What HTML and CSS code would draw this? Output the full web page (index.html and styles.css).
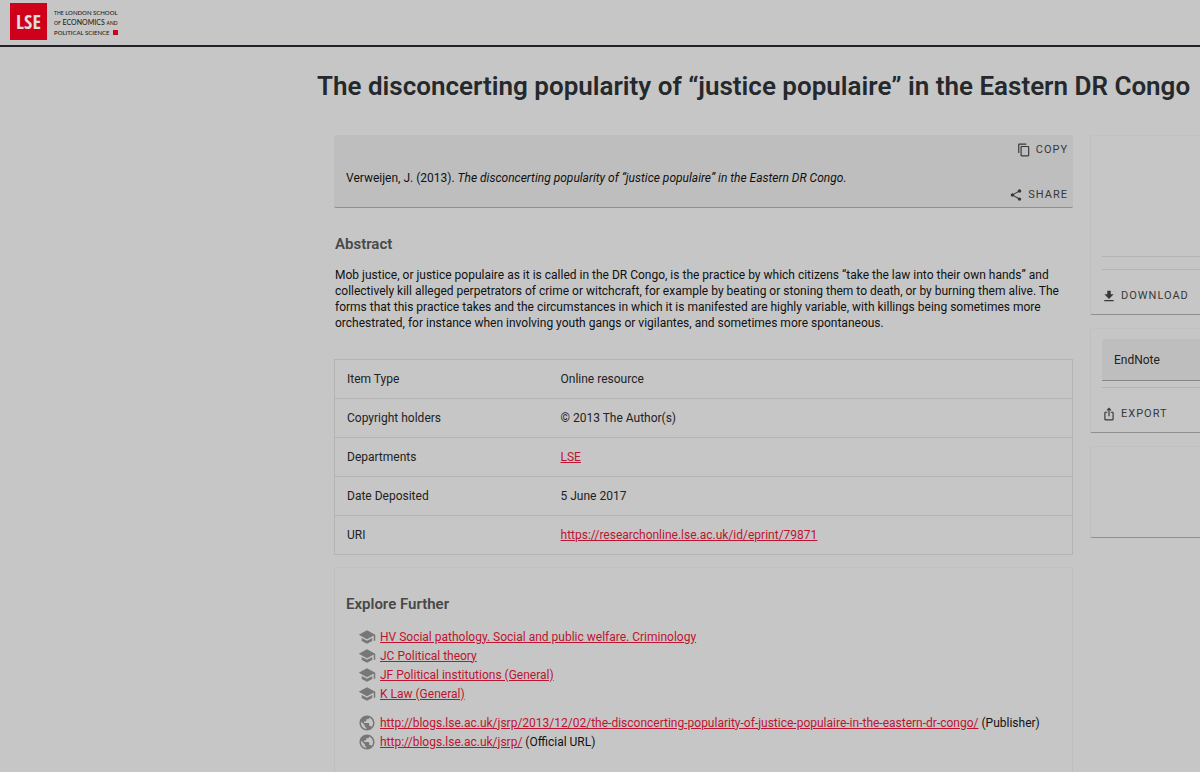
FILE: index.html
```html
<!DOCTYPE html>
<html lang="en">
<head>
    <meta charset="UTF-8">
    <meta name="viewport" content="width=device-width, initial-scale=1.0">
    <title>The disconcerting popularity of “justice populaire” in the Eastern DR Congo</title>
    <link rel="stylesheet" href="styles.css">
</head>
<body>
    <!-- icons used more than once -->
    <svg class="sprite" width="0" height="0" aria-hidden="true">
        <symbol id="school" viewBox="0 0 24 24">
            <path d="M5 13.18v4L12 21l7-3.82v-4L12 17l-7-3.82zM12 3L1 9l11 6 9-4.91V17h2V9L12 3z"/>
        </symbol>
        <symbol id="globe" viewBox="0 0 24 24">
            <path d="M12 2C6.48 2 2 6.48 2 12s4.48 10 10 10 10-4.48 10-10S17.52 2 12 2zm-1 17.93c-3.95-.49-7-3.85-7-7.93 0-.62.08-1.21.21-1.79L9 15v1c0 1.1.9 2 2 2v1.93zm6.9-2.54c-.26-.81-1-1.39-1.9-1.39h-1v-3c0-.55-.45-1-1-1H8v-2h2c.55 0 1-.45 1-1V7h2c1.1 0 2-.9 2-2v-.41c2.93 1.19 5 4.06 5 7.41 0 2.08-.8 3.97-2.1 5.39z"/>
        </symbol>
    </svg>

    <header class="site-header">
        <a class="logo" href="#">
            <span class="logo-box">LSE</span>
            <span class="logo-name">
                <span><small>THE</small> LONDON SCHOOL</span>
                <span class="wide"><small>OF</small> ECONOMICS <small>AND</small></span>
                <span>POLITICAL SCIENCE <i class="logo-mark"></i></span>
            </span>
        </a>
    </header>

    <div class="page">
        <h1>The disconcerting popularity of “justice populaire” in the Eastern DR Congo</h1>

        <div class="layout">
            <main>
                <section class="citation">
                    <p>Verweijen, J. (2013). <em>The disconcerting popularity of “justice populaire” in the Eastern DR Congo.</em></p>
                    <div class="actions">
                        <button type="button">
                            <svg width="14" height="14" viewBox="0 0 24 24"><path d="M16 1H4C2.900 1 2 1.900 2 3v14h2V3h12V1zm3 4H8c-1.100 0-2 .9-2 2v14c0 1.100.9 2 2 2h11c1.100 0 2-.9 2-2V7c0-1.100-.9-2-2-2zm0 16H8V7h11v14z"/></svg>
                            Copy
                        </button>
                        <button type="button">
                            <svg width="14" height="14" viewBox="0 0 24 24"><path d="M18 16.080c-.76 0-1.440.3-1.960.77L8.910 12.700c.05-.23.09-.46.09-.7s-.04-.47-.09-.7l7.050-4.110c.54.5 1.250.81 2.040.81 1.660 0 3-1.340 3-3s-1.340-3-3-3-3 1.340-3 3c0 .24.04.47.09.7L8.040 9.810C7.500 9.310 6.790 9 6 9c-1.660 0-3 1.340-3 3s1.340 3 3 3c.79 0 1.500-.31 2.040-.81l7.120 4.160c-.05.21-.08.43-.08.65 0 1.610 1.310 2.920 2.920 2.920s2.920-1.310 2.920-2.920-1.310-2.920-2.920-2.920z"/></svg>
                            Share
                        </button>
                    </div>
                </section>

                <section class="abstract">
                    <h2>Abstract</h2>
                    <p>Mob justice, or justice populaire as it is called in the DR Congo, is the practice by which citizens “take the law into their own hands” and collectively kill alleged perpetrators of crime or witchcraft, for example by beating or stoning them to death, or by burning them alive. The forms that this practice takes and the circumstances in which it is manifested are highly variable, with killings being sometimes more orchestrated, for instance when involving youth gangs or vigilantes, and sometimes more spontaneous.</p>
                </section>

                <table class="details">
                    <tr><th scope="row">Item Type</th><td>Online resource</td></tr>
                    <tr><th scope="row">Copyright holders</th><td>© 2013 The Author(s)</td></tr>
                    <tr><th scope="row">Departments</th><td><a href="#">LSE</a></td></tr>
                    <tr><th scope="row">Date Deposited</th><td>5 June 2017</td></tr>
                    <tr><th scope="row">URI</th><td><a href="#">https://researchonline.lse.ac.uk/id/eprint/79871</a></td></tr>
                </table>

                <section class="card explore">
                    <h2>Explore Further</h2>
                    <ul>
                        <li><svg><use href="#school"/></svg><a href="#">HV Social pathology. Social and public welfare. Criminology</a></li>
                        <li><svg><use href="#school"/></svg><a href="#">JC Political theory</a></li>
                        <li><svg><use href="#school"/></svg><a href="#">JF Political institutions (General)</a></li>
                        <li><svg><use href="#school"/></svg><a href="#">K Law (General)</a></li>
                    </ul>
                    <ul>
                        <li><svg><use href="#globe"/></svg><a href="#">http://blogs.lse.ac.uk/jsrp/2013/12/02/the-disconcerting-popularity-of-justice-populaire-in-the-eastern-dr-congo/</a> (Publisher)</li>
                        <li><svg><use href="#globe"/></svg><a href="#">http://blogs.lse.ac.uk/jsrp/</a> (Official URL)</li>
                    </ul>
                </section>
            </main>

            <aside>
                <section class="card download">
                    <div class="preview"></div>
                    <div class="card-actions">
                        <button type="button">
                            <svg width="14" height="14" viewBox="0 0 24 24"><path d="M20 9h-5V3H9v6H4l8 8 8-8zM4 19v2h16v-2H4z"/></svg>
                            Download
                        </button>
                    </div>
                </section>
                <section class="card export">
                    <select aria-label="Export format">
                        <option>EndNote</option>
                    </select>
                    <div class="card-actions">
                        <button type="button">
                            <svg width="14" height="14" viewBox="0 0 24 24"><path d="M16 5l-1.420 1.420-1.590-1.590V16h-1.980V4.830L9.420 6.420 8 5l4-4 4 4zm4 5v11c0 1.100-.9 2-2 2H6c-1.110 0-2-.9-2-2V10c0-1.110.89-2 2-2h3v2H6v11h12V10h-3V8h3c1.100 0 2 .89 2 2z"/></svg>
                            Export
                        </button>
                    </div>
                </section>
                <section class="card empty"></section>
            </aside>
        </div>
    </div>
</body>
</html>
```
FILE: styles.css
```css
* {
    box-sizing: border-box;
}
body {
    margin: 0;
    background-color: #c6c6c6;
    color: #111;
    font-family: Roboto, sans-serif;
    font-size: 12px;
    line-height: 16px;
    overflow-x: hidden;
    scrollbar-width: none;
}
h1, h2, p, ul {
    margin: 0;
    padding: 0;
}
a {
    color: #bd1431;
}
.sprite {
    position: absolute;
}

/* header */
.site-header {
    height: 47px;
    padding: 3px 10px;
    border-bottom: 2px solid #222328;
}
.logo {
    display: inline-flex;
    gap: 7px;
    color: #222;
    text-decoration: none;
}
.logo-box {
    display: flex;
    align-items: center;
    justify-content: center;
    width: 37px;
    height: 37px;
    background-color: #cf0019;
    color: #ddd;
    font-family: "Liberation Sans Narrow", "Open Sans Condensed", Lato, sans-serif;
    font-size: 20px;
}
.logo-name {
    display: flex;
    flex-direction: column;
    padding-top: 5px;
    font-family: Lato, sans-serif;
    font-size: 6px;
    font-weight: 500;
    line-height: 9px;
    white-space: nowrap;
}
.logo-name .wide {
    font-size: 7px;
}
.logo-name small {
    font-size: 5px;
}
.logo-mark {
    display: inline-block;
    width: 5px;
    height: 5px;
    margin-left: 2px;
    background-color: #cf0019;
}

/* page grid */
.page {
    margin-left: calc(28% - 2px);
}
h1 {
    margin: 24px 0 33px -17px;
    color: #25292c;
    font-size: 26px;
    font-weight: 600;
    line-height: 31px;
    white-space: nowrap;
}
h2 {
    color: #484848;
    font-size: 15px;
    font-weight: 600;
    line-height: 20px;
}
.layout {
    display: grid;
    grid-template-columns: minmax(0, 1fr) 120px;
    gap: 17px;
    margin-right: -10px;
}

.card {
    border: 1px solid #bebebe;
    border-top-color: #c2c2c2;
    border-radius: 2px;
}
button {
    display: inline-flex;
    align-items: center;
    gap: 5px;
    padding: 0;
    border: none;
    background: none;
    color: #383838;
    font-family: inherit;
    font-size: 11px;
    line-height: 16px;
    letter-spacing: 1px;
    text-transform: uppercase;
    cursor: pointer;
}
svg {
    fill: currentColor;
}

/* citation */
.citation {
    display: flex;
    justify-content: space-between;
    align-items: center;
    height: 73px;
    padding: 7px 5px 4px 12px;
    background-color: #bebebe;
    border-bottom: 1px solid #8f8f8f;
    border-radius: 2px;
}
.citation p {
    padding-top: 10px;
}
.actions {
    display: flex;
    flex-direction: column;
    justify-content: space-between;
    align-items: flex-end;
    height: 100%;
}

.abstract {
    padding: 26px 0 28px 1px;
}
.abstract p {
    margin-top: 13px;
}

/* details */
.details {
    width: 100%;
    border: 1px solid #b3b3b3;
    border-collapse: collapse;
    color: #222;
}
.details tr {
    border-bottom: 1px solid #b3b3b3;
}
.details th,
.details td {
    padding: 11px 12px;
    text-align: left;
    font-weight: 400;
}
.details th {
    width: 29%;
}

/* explore further */
.explore {
    margin-top: 12px;
    padding: 26px 11px 24px;
    border-bottom: 1px solid #8f8f8f;
}
.explore ul {
    margin: 13px 0 0 12px;
    list-style: none;
}
.explore ul + ul {
    margin-top: 10px;
}
.explore li {
    display: flex;
    align-items: center;
    height: 19px;
    white-space: pre;
}
.explore svg {
    width: 18px;
    height: 18px;
    margin-right: 4px;
    color: #777;
}

/* sidebar */
aside {
    display: flex;
    flex-direction: column;
    gap: 13px;
}
aside .card {
    padding-left: 11px;
    border-bottom-color: #8f8f8f;
}
.preview {
    height: 121px;
    border-bottom: 1px solid #b3b3b3;
}
.card-actions {
    padding: 18px 0 10px;
    border-top: 1px solid #b3b3b3;
}
.card-actions button {
    display: flex;
}
.download .card-actions {
    margin-top: 12px;
}
.export .card-actions {
    margin-top: 6px;
}
.export {
    padding-top: 10px;
}
select {
    display: block;
    width: 100%;
    height: 42px;
    padding: 0 12px;
    appearance: none;
    border: none;
    border-bottom: 1px solid #888;
    border-radius: 2px 2px 0 0;
    background-color: #bebebe;
    color: #222;
    font-family: inherit;
    font-size: 12px;
}
.empty {
    height: 92px;
}
```
